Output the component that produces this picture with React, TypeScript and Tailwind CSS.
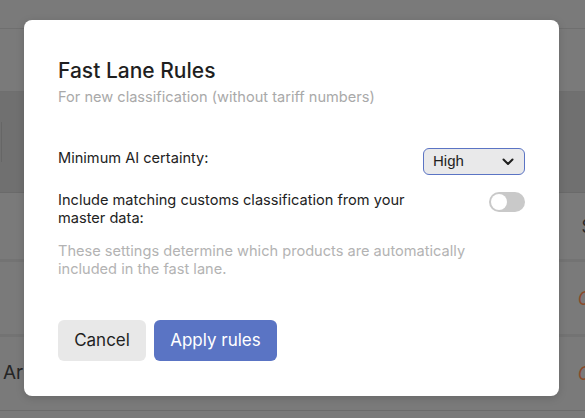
import React from "react";

export default function App() {
  return (
    <div className="relative h-[418px] w-[585px] overflow-hidden bg-[#7a7a7a]" style={{ fontFamily: "Inter, 'Noto Sans', sans-serif" }}>
      {/* dimmed page behind */}
      <div className="flex flex-col">
        <div className="h-[29px] border-b border-[#6f6f6f]" />
        <div className="h-[63px] border-b border-[#6f6f6f]" />
        <div className="flex h-[101px] items-center border-b border-[#6a6a6a] bg-[#707070]">
          <div className="h-[40px] w-[2px] border-r border-[#666]" />
        </div>
        <div className="flex h-[69px] items-center justify-end border-b-[3px] border-[#737373]">
          <span className="mr-[-8px] text-[18px] text-[#2a2a2a]">S</span>
        </div>
        <div className="flex h-[75px] items-center justify-end border-b-[3px] border-[#737373]">
          <span className="mr-[-6px] text-[18px] italic text-[#8a4a2a]">C</span>
        </div>
        <div className="flex h-[74px] items-center justify-between border-b border-[#6c6c6c]">
          <span className="ml-[3px] text-[19px] text-[#252525]">Ar</span>
          <span className="mr-[-6px] text-[18px] italic text-[#8a4a2a]">C</span>
        </div>
      </div>

      {/* modal */}
      <div className="absolute left-[24px] top-[20px] flex h-[376px] w-[535px] flex-col rounded-[8px] bg-white px-[34px] pt-[37px] shadow-[0_2px_8px_rgba(0,0,0,0.15)]">
        <h2 className="text-[21px] font-medium leading-[28px] text-[#1f1f1f]">Fast Lane Rules</h2>
        <p className="mt-[2px] text-[14.6px] leading-[20px] text-[#a9a9a9]">For new classification (without tariff numbers)</p>

        <div className="mt-[41px] flex items-start justify-between">
          <span className="mt-[1px] text-[14.6px] leading-[18px] text-[#222]">Minimum AI certainty:</span>
          <div className="flex h-[27px] w-[102px] items-center justify-between rounded-[6px] border border-[#5b74c4] bg-[#e9e9ea] pl-[9px] pr-[10px]">
            <span className="text-[15px] text-[#1f1f1f]" style={{ fontFamily: "'Liberation Sans', Arial, sans-serif" }}>High</span>
            <svg width="12" height="8" viewBox="0 0 12 8" fill="none">
              <path d="M1.5 1.5L6 6L10.5 1.5" stroke="#1f1f1f" strokeWidth="2" strokeLinecap="round" strokeLinejoin="round" />
            </svg>
          </div>
        </div>

        <div className="mt-[16px] flex items-start justify-between">
          <span className="w-[360px] text-[14.6px] leading-[18px] text-[#222]">Include matching customs classification from your master data:</span>
          <div className="mt-[1px] flex h-[20px] w-[36px] items-center rounded-full bg-[#c9c9c9] px-[2px]">
            <div className="h-[16px] w-[16px] rounded-full bg-white" />
          </div>
        </div>

        <p className="mt-[15px] w-[420px] text-[14.6px] leading-[18px] text-[#b3b3b3]">These settings determine which products are automatically included in the fast lane.</p>

        <div className="mt-[42px] flex gap-[8px]">
          <button className="h-[41px] w-[88px] rounded-[6px] bg-[#e8e8e8] text-[17px] text-[#1f1f1f]">Cancel</button>
          <button className="h-[41px] w-[123px] rounded-[6px] bg-[#5a74c4] text-[17px] text-white">Apply rules</button>
        </div>
      </div>
    </div>
  );
}
